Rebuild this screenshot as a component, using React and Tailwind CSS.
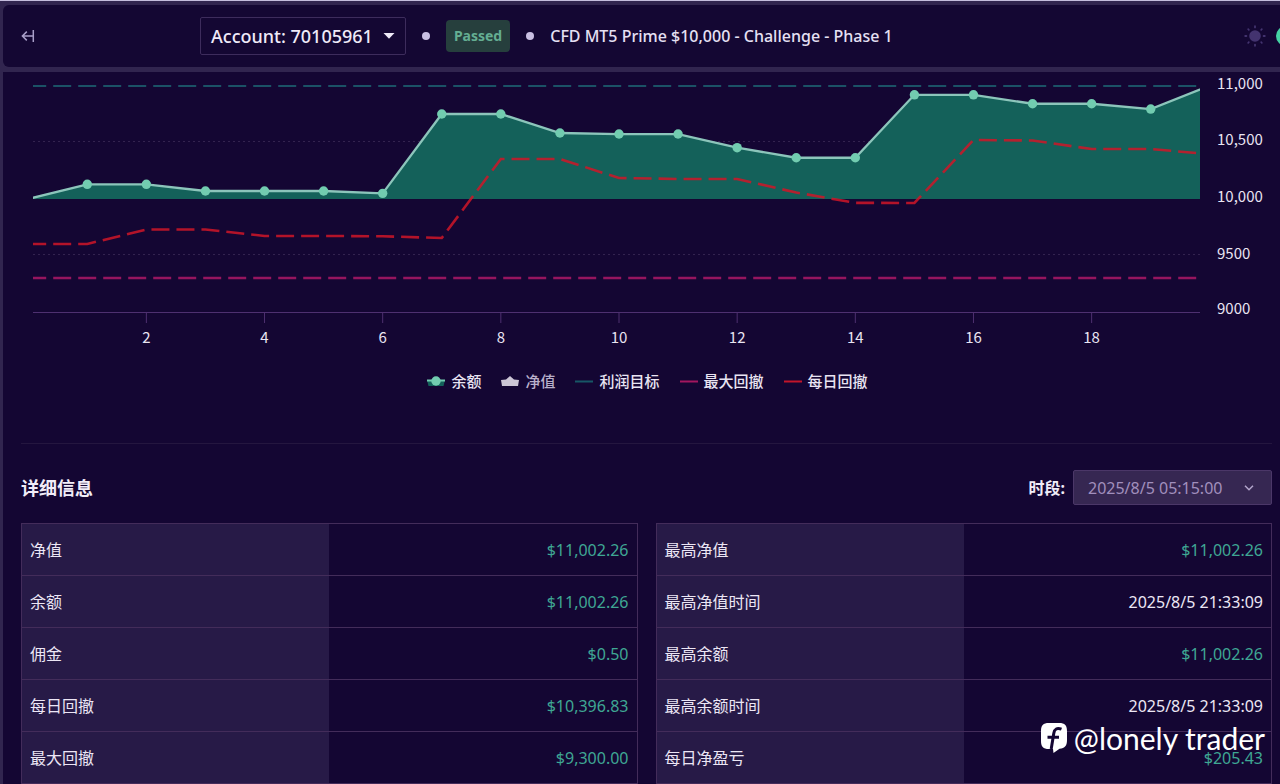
import React from "react";

const X0 = 25.2;
const STEP = 59.08;
const x = (i) => X0 + i * STEP;
const y = (v) => 240 - (v - 9000) * 0.113;

const balance = [
  10000, 10130, 10130, 10071, 10071, 10071, 10050, 10752, 10752, 10584, 10575,
  10575, 10454, 10365, 10365, 10922, 10922, 10843, 10843, 10796, 11002.26,
];
const daily = [
  9602, 9602, 9730, 9730, 9673, 9673, 9670, 9655, 10354, 10354, 10186, 10177,
  10177, 10057, 9966, 9965, 10522, 10518, 10442, 10442, 10396.83,
];

const toPoints = (values) => values.map((v, i) => `${x(i)},${y(v)}`).join(" ");

const leftRows = [
  ["净值", "$11,002.26"],
  ["余额", "$11,002.26"],
  ["佣金", "$0.50"],
  ["每日回撤", "$10,396.83"],
  ["最大回撤", "$9,300.00"],
];
const rightRows = [
  ["最高净值", "$11,002.26"],
  ["最高净值时间", "2025/8/5 21:33:09"],
  ["最高余额", "$11,002.26"],
  ["最高余额时间", "2025/8/5 21:33:09"],
  ["每日净盈亏", "$205.43"],
];

function Dot() {
  return <span className="size-2 shrink-0 rounded-full bg-[#c9bfe3]" />;
}

function Header() {
  return (
    <header className="flex h-[62px] items-center overflow-hidden rounded-l-md bg-[#140733] pl-[18px]">
      <button type="button" aria-label="Collapse menu" className="text-[#a99fc9]">
        <svg viewBox="0 0 14 14" className="block size-[14px]" fill="none" stroke="currentColor" strokeWidth="1.5">
          <path d="M12.3 1v12M11.5 7H1.5M5.8 2.6 1.4 7l4.4 4.4" />
        </svg>
      </button>
      <button
        type="button"
        className="ml-[165px] flex h-[38px] items-center gap-2.5 rounded-xs border border-[#3d2c5c] px-2.5 text-lg font-medium text-[#efeaf8]"
      >
        Account: 70105961
        <svg viewBox="0 0 12 6" className="w-3" fill="currentColor">
          <path d="M0.5 0h11L6 5.8z" />
        </svg>
      </button>
      <div className="ml-4 flex items-center gap-4">
        <Dot />
        <span className="flex h-8 items-center rounded bg-[#263f3d] px-2 text-sm font-bold text-[#64ae92]">Passed</span>
        <Dot />
        <h1 className="text-base font-medium text-[#e6e0f3]">CFD MT5 Prime $10,000 - Challenge - Phase 1</h1>
      </div>
      <button type="button" aria-label="Toggle theme" className="ml-auto text-[#43336f]">
        <svg viewBox="0 0 22 22" className="block size-[22px]" fill="currentColor">
          <circle cx="11" cy="11" r="5.8" />
          <g stroke="currentColor" strokeWidth="1.8" strokeLinecap="round">
            <path d="M11 1.2v1.2M11 19.600v1.2M1.200 11h1.200M19.600 11h1.200M4.200 4.200l.6.6M17.200 17.200l.6.6M4.200 17.800l.6-.6M17.200 4.800l.6-.6" />
          </g>
        </svg>
      </button>
      <button type="button" aria-label="Profile" className="-mr-4 ml-2.5 size-5 rounded-full bg-[#45d3a4]" />
    </header>
  );
}

function Chart() {
  const line = toPoints(balance);
  return (
    <svg viewBox="0 0 1277 282" className="block w-full" role="img" aria-label="余额">
      <defs>
        <clipPath id="plot">
          <rect x="30" y="0" width="1167" height="260" />
        </clipPath>
      </defs>
      <g stroke="#33234f" strokeDasharray="2 3">
        {[9500, 10000, 10500].map((v) => (
          <line key={v} x1="30" x2="1197" y1={Math.floor(y(v)) - 0.5} y2={Math.floor(y(v)) - 0.5} />
        ))}
      </g>
      <g clipPath="url(#plot)" fill="none">
        <polygon points={`${x(0)},${y(10000)} ${line} ${x(20)},${y(10000)}`} fill="#14615a" />
        <line x1={x(0)} x2={x(20)} y1={y(11000)} y2={y(11000)} stroke="#1b5266" strokeWidth="2" strokeDasharray="18 7" />
        <line x1={x(0)} x2={x(20)} y1={y(9300)} y2={y(9300)} stroke="#96155f" strokeWidth="2.5" strokeDasharray="18 7" />
        <polyline points={toPoints(daily)} stroke="#cf1628" strokeOpacity="0.85" strokeWidth="2.6" strokeDasharray="18 7" />
        <polyline points={line} stroke="#8cc5bb" strokeWidth="2.3" />
      </g>
      <g fill="#72ccb0">
        {balance.slice(1, 20).map((v, i) => (
          <circle key={i} cx={x(i + 1)} cy={y(v)} r="4.7" />
        ))}
      </g>
      <line x1="30" x2="1197" y1="240.5" y2="240.5" stroke="#4e3070" />
      <g className="font-['Noto_Sans_CJK_SC',sans-serif] text-[15px]" fill="#e9e4f2">
        {[2, 4, 6, 8, 10, 12, 14, 16, 18].map((n) => (
          <g key={n}>
            <line x1={x(n)} x2={x(n)} y1="241" y2="251" stroke="#4e3070" />
            <text x={x(n)} y="271" textAnchor="middle">{n}</text>
          </g>
        ))}
        <text x="1214" y="17">11,000</text>
        <text x="1214" y="73">10,500</text>
        <text x="1214" y="130">10,000</text>
        <text x="1214" y="187">9500</text>
        <text x="1214" y="242">9000</text>
      </g>
    </svg>
  );
}

function LegendItem({ label, color, shape, muted }) {
  return (
    <button type="button" className={muted ? "flex items-center gap-1.5 text-[#b9b0cb]" : "flex items-center gap-1.5 text-[#e9e4f2]"}>
      <svg viewBox="0 0 18 12" className="h-3 w-[18px]">
        {shape === "line" && <path d="M0 6.5h18" stroke={color} strokeWidth="2" />}
        {shape === "dot" && (
          <g>
            <path d="M0 5h18l-1.5 6h-15z" fill="#14615a" />
            <path d="M0 5.5h18" stroke="#72ccb0" strokeWidth="2" />
            <circle cx="9" cy="6" r="4.7" fill="#72ccb0" />
          </g>
        )}
        {shape === "area" && <path d="M0 5 5 4.500 9 1l4 3.500 5 .5L17 11H1z" fill={color} />}
      </svg>
      {label}
    </button>
  );
}

function Legend() {
  return (
    <div className="flex justify-center gap-5 pt-[15px] pl-3 font-['Noto_Sans_CJK_SC',sans-serif] text-[15px] leading-6 font-medium">
      <LegendItem label="余额" shape="dot" />
      <LegendItem label="净值" shape="area" color="#cdc6d6" muted />
      <LegendItem label="利润目标" shape="line" color="#175666" />
      <LegendItem label="最大回撤" shape="line" color="#a3165f" />
      <LegendItem label="每日回撤" shape="line" color="#c3152a" />
    </div>
  );
}

function Stats({ rows }) {
  return (
    <table className="w-full table-fixed border-collapse border border-[#432c5a] text-base">
      <tbody>
        {rows.map(([label, value]) => (
          <tr key={label} className="h-[52px] border-b border-[#432c5a]">
            <th scope="row" className="bg-[#271a47] px-2 text-left font-normal text-[#ece6f5]">{label}</th>
            <td className={value.startsWith("$") ? "px-2 text-right text-[#3fa793]" : "px-2 text-right text-[#ece6f5]"}>{value}</td>
          </tr>
        ))}
      </tbody>
    </table>
  );
}

function Watermark() {
  return (
    <div className="absolute right-[15px] bottom-[26px] flex items-center gap-1.5 font-[Lato,'Noto_Sans',sans-serif] text-[30px] leading-10 text-white">
      <svg viewBox="0 0 28 32" className="h-8 w-7">
        <path d="M9 1h10c6 0 8 2.500 8 8v9c0 6-2 8-7.500 8.800L13.500 31 13 27H9c-6 0-8-2.500-8-8V9c0-5.500 2-8 8-8z" fill="#fff" />
        <path d="M21.500 7.200c-4.500-1.700-7-.2-7.700 4L11.200 27M7.500 15.200h11.500" fill="none" stroke="#140633" strokeWidth="3" />
      </svg>
      @lonely trader
    </div>
  );
}

export default function App() {
  return (
    <div className="relative h-screen overflow-hidden border-t border-[#c4bddd] bg-[#31254f] pt-1 pl-[3px] font-['Noto_Sans','Noto_Sans_CJK_SC',sans-serif]">
      <Header />
      <main className="mt-[5px] bg-[#140633]">
        <Chart />
        <Legend />
        <section className="mt-[50px] mr-2 ml-[18px] border-t border-[#24163f]">
          <div className="flex items-center justify-between pt-[26px] pb-[18px]">
            <h2 className="text-lg font-bold text-[#f1edf8]">详细信息</h2>
            <div className="flex items-center gap-2">
              <label htmlFor="period" className="text-base font-bold text-[#f1edf8]">时段:</label>
              <div className="relative">
                <select
                  id="period"
                  className="h-[35px] w-[199px] appearance-none rounded-xs border border-[#4b3768] bg-[#362752] pl-3.5 text-base text-[#a18fbd]"
                >
                  <option>2025/8/5 05:15:00</option>
                </select>
                <svg viewBox="0 0 10 6" className="pointer-events-none absolute top-1/2 right-[18px] w-2.5 -translate-y-1/2" fill="none" stroke="#b3a6cc" strokeWidth="1.500">
                  <path d="M1 0.800 5 4.800 9 0.800" />
                </svg>
              </div>
            </div>
          </div>
          <div className="grid grid-cols-2 gap-[18px]">
            <Stats rows={leftRows} />
            <Stats rows={rightRows} />
          </div>
        </section>
      </main>
      <Watermark />
    </div>
  );
}
